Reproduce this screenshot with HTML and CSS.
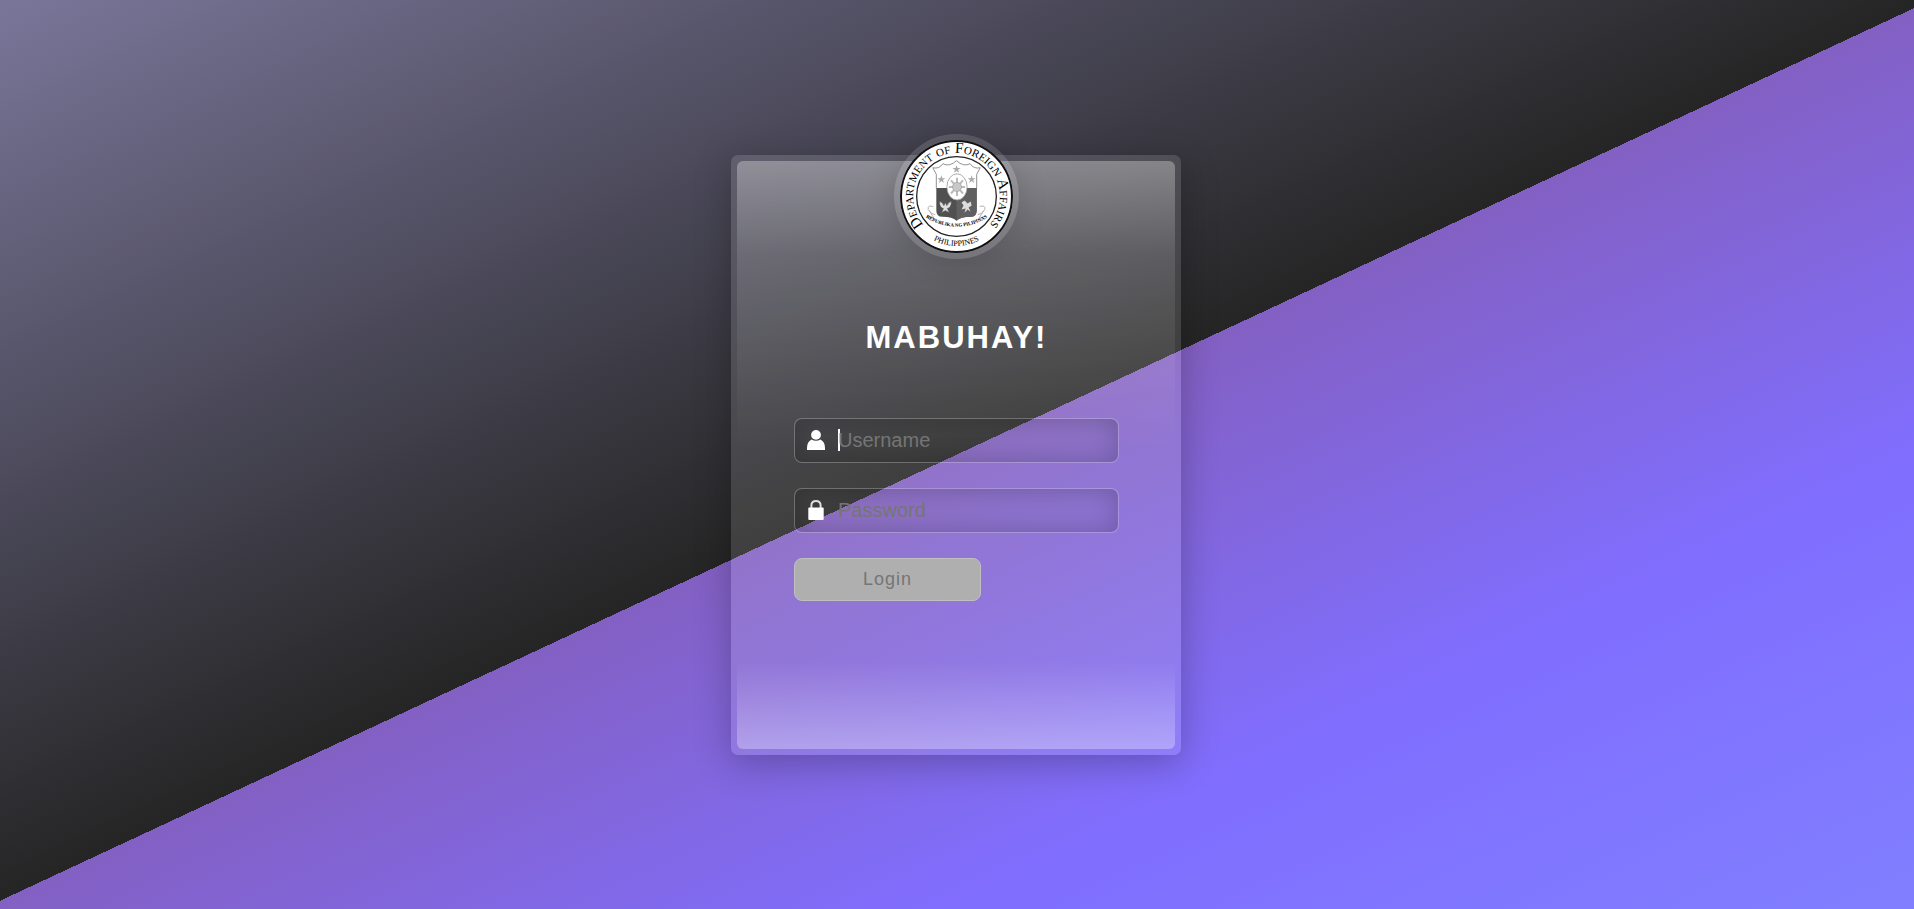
FILE: index.html
```html
<!DOCTYPE html>
<html lang="en">
<head>
<meta charset="utf-8">
<title>Login</title>
<link rel="stylesheet" href="styles.css">
</head>
<body>
<main class="card">
  <svg class="seal" viewBox="0 0 112 112" role="img" aria-label="Department of Foreign Affairs, Philippines">
    <defs>
      <path id="arc-top" d="M28.400 88.900A43 43 0 1 1 83.600 88.900"/>
      <path id="arc-bottom" d="M21 90.300A49 49 0 0 0 91 90.300"/>
      <path id="arc-motto" d="M24 76Q56 96 88 76"/>
      <path id="star" d="M0-4 1-1.200H4L1.600.6 2.500 3.500 0 1.700-2.500 3.500-1.600.6-4-1.200H-1z"/>
    </defs>
    <circle cx="56" cy="56" r="55" fill="#fff" stroke="#111" stroke-width="2"/>
    <circle cx="56" cy="56" r="39.500" fill="none" stroke="#222" stroke-width="1.300"/>
    <text class="seal-ring"><textPath href="#arc-top" startOffset="50%" text-anchor="middle">Department of Foreign Affairs</textPath></text>
    <text class="seal-name"><textPath href="#arc-bottom" startOffset="50%" text-anchor="middle">PHILIPPINES</textPath></text>
    <path d="M36 48V34L32.500 27.500Q39 29 42.500 23.500Q49 27 56 20.500Q63 27 69.500 23.500Q73 29 79.500 27.500L76 34V48" fill="#fff" stroke="#888" stroke-width=".9"/>
    <path d="M36 47.500H76V70Q76 76 70 76Q60 76 56 80Q52 76 42 76Q36 76 36 70z" fill="#505050"/>
    <path d="M56 47.500V80Q60 76 70 76Q76 76 76 70V47.500z" fill="#606060"/>
    <ellipse cx="56.500" cy="46.500" rx="10" ry="13" fill="#fff" stroke="#999" stroke-width=".8"/>
    <g stroke="#bbb" stroke-width="2"><path d="M56.500 37.500V55.500M48.500 46.500H64.500M50.500 40 62.500 53M62.500 40 50.500 53"/></g>
    <circle cx="56.500" cy="46.500" r="4.500" fill="#c8c8c8" stroke="#999" stroke-width=".6"/>
    <g fill="#aaa"><use href="#star" x="56" y="29"/><use href="#star" x="41" y="39"/><use href="#star" x="71" y="39"/></g>
    <path d="M39 61Q42 61 43.500 65L45 62 46.500 65Q48 61 51 61Q51 67 47 68L49 72 45 70 41 72 43 68Q39 67 39 61z" fill="#ddd" stroke="#505050" stroke-width=".6"/>
    <path d="M61 62 64 60 67 63 70 61 71 65 68 67 70 71 67 69 64 72 65 68 61 69 63 65z" fill="#ddd"/>
    <g fill="none" stroke="#aaa" stroke-width=".9"><path d="M33 66Q27 64 28 69Q31 74 35 74M79 66Q85 64 84 69Q81 74 77 74M29 70 34 78 27 75M83 70 78 78 85 75"/></g>
    <text class="seal-motto"><textPath href="#arc-motto" startOffset="50%" text-anchor="middle">REPUBLIKA NG PILIPINAS</textPath></text>
  </svg>
  <div class="panel">
    <h1 class="title">MABUHAY!</h1>
    <form class="form">
      <label class="field">
        <svg class="icon" viewBox="0 0 20 20" aria-hidden="true"><circle cx="10" cy="4.900" r="4.900"/><path d="M1 20V18Q1 12 5.500 9.600Q10 12 14.500 9.600Q19 12 19 18V20z"/></svg>
        <input class="input" type="text" placeholder="Username" aria-label="Username" autofocus>
      </label>
      <label class="field">
        <svg class="icon" viewBox="0 0 20 20" aria-hidden="true"><path d="M5.400 9V5.500Q5.400 1 10 1T14.600 5.500V9" fill="none" stroke="#ddd" stroke-width="2"/><rect x="2.300" y="7.500" width="15.400" height="12.500" rx="1"/></svg>
        <input class="input" type="password" placeholder="Password" aria-label="Password">
      </label>
      <button class="login" type="submit" disabled>Login</button>
    </form>
  </div>
</main>
</body>
</html>
```
FILE: styles.css
```css
* { box-sizing: border-box; }

body {
  margin: 0;
  padding-right: 2px;
  min-height: 100vh;
  display: flex;
  align-items: center;
  justify-content: center;
  font-family: "Liberation Sans", Arial, sans-serif;
  background: linear-gradient(155deg, #7a769a 0%, #252525 50%, #8360c3 50%, #806eff 75%, #817fff 100%);
}

.card {
  position: relative;
  display: flex;
  width: 450px;
  min-height: 600px;
  padding: 6px;
  border-radius: 7px;
  background: rgba(255, 255, 255, 0.12);
  box-shadow: 0 8px 36px rgba(0, 0, 0, 0.25);
}

.panel {
  flex: 1;
  padding: 157px 56px 56px 57px;
  border-radius: 6px;
  background:
    linear-gradient(to top, rgba(255, 255, 255, 0.3), transparent 15%),
    linear-gradient(rgba(255, 255, 255, 0.31), rgba(255, 255, 255, 0.12) 16%, transparent 50%);
}

.seal {
  position: absolute;
  top: -21px;
  left: 50%;
  width: 125px;
  height: 125px;
  margin-left: -62px;
  border: 6px solid rgba(255, 255, 255, 0.12);
  border-radius: 50%;
  box-shadow: 0 4px 30px rgba(0, 0, 0, 0.15);
}

.seal-ring { font: small-caps 15px "Liberation Serif", serif; }
.seal-name { font: 8px "Liberation Serif", serif; }
.seal-motto { font: bold 5px "Liberation Serif", serif; }

.title {
  margin: 0;
  text-align: center;
  color: #fff;
  font-size: 31px;
  line-height: 40px;
  letter-spacing: 2px;
}

.form {
  display: flex;
  flex-direction: column;
  gap: 25px;
  margin-top: 60px;
}

.field {
  display: flex;
  align-items: center;
  gap: 12px;
  height: 45px;
  padding: 0 11px;
  border: 1px solid rgba(255, 255, 255, 0.25);
  border-radius: 8px;
  background: rgba(0, 0, 0, 0.03);
  box-shadow: inset 0 0 28px rgba(0, 0, 0, 0.22);
}

.icon {
  flex: none;
  width: 20px;
  height: 20px;
  fill: #fff;
}

.input {
  flex: 1;
  min-width: 0;
  height: 43px;
  padding: 0;
  border: 0;
  outline: 0;
  background: none;
  color: #fff;
  font: 20px "Liberation Sans", Arial, sans-serif;
}
.input::placeholder { color: #757575; }

/* Wide steady caret while the focused field is empty */
.input:focus:placeholder-shown {
  caret-color: transparent;
  background: linear-gradient(#fff, #fff) no-repeat left center / 2px 22px;
}

.login {
  width: 187px;
  height: 43px;
  padding: 0;
  border: 1px solid #c0c0c0;
  border-radius: 8px;
  background: #afafaf;
  color: #757575;
  font: 18px "Liberation Sans", Arial, sans-serif;
  letter-spacing: 1px;
}
```
